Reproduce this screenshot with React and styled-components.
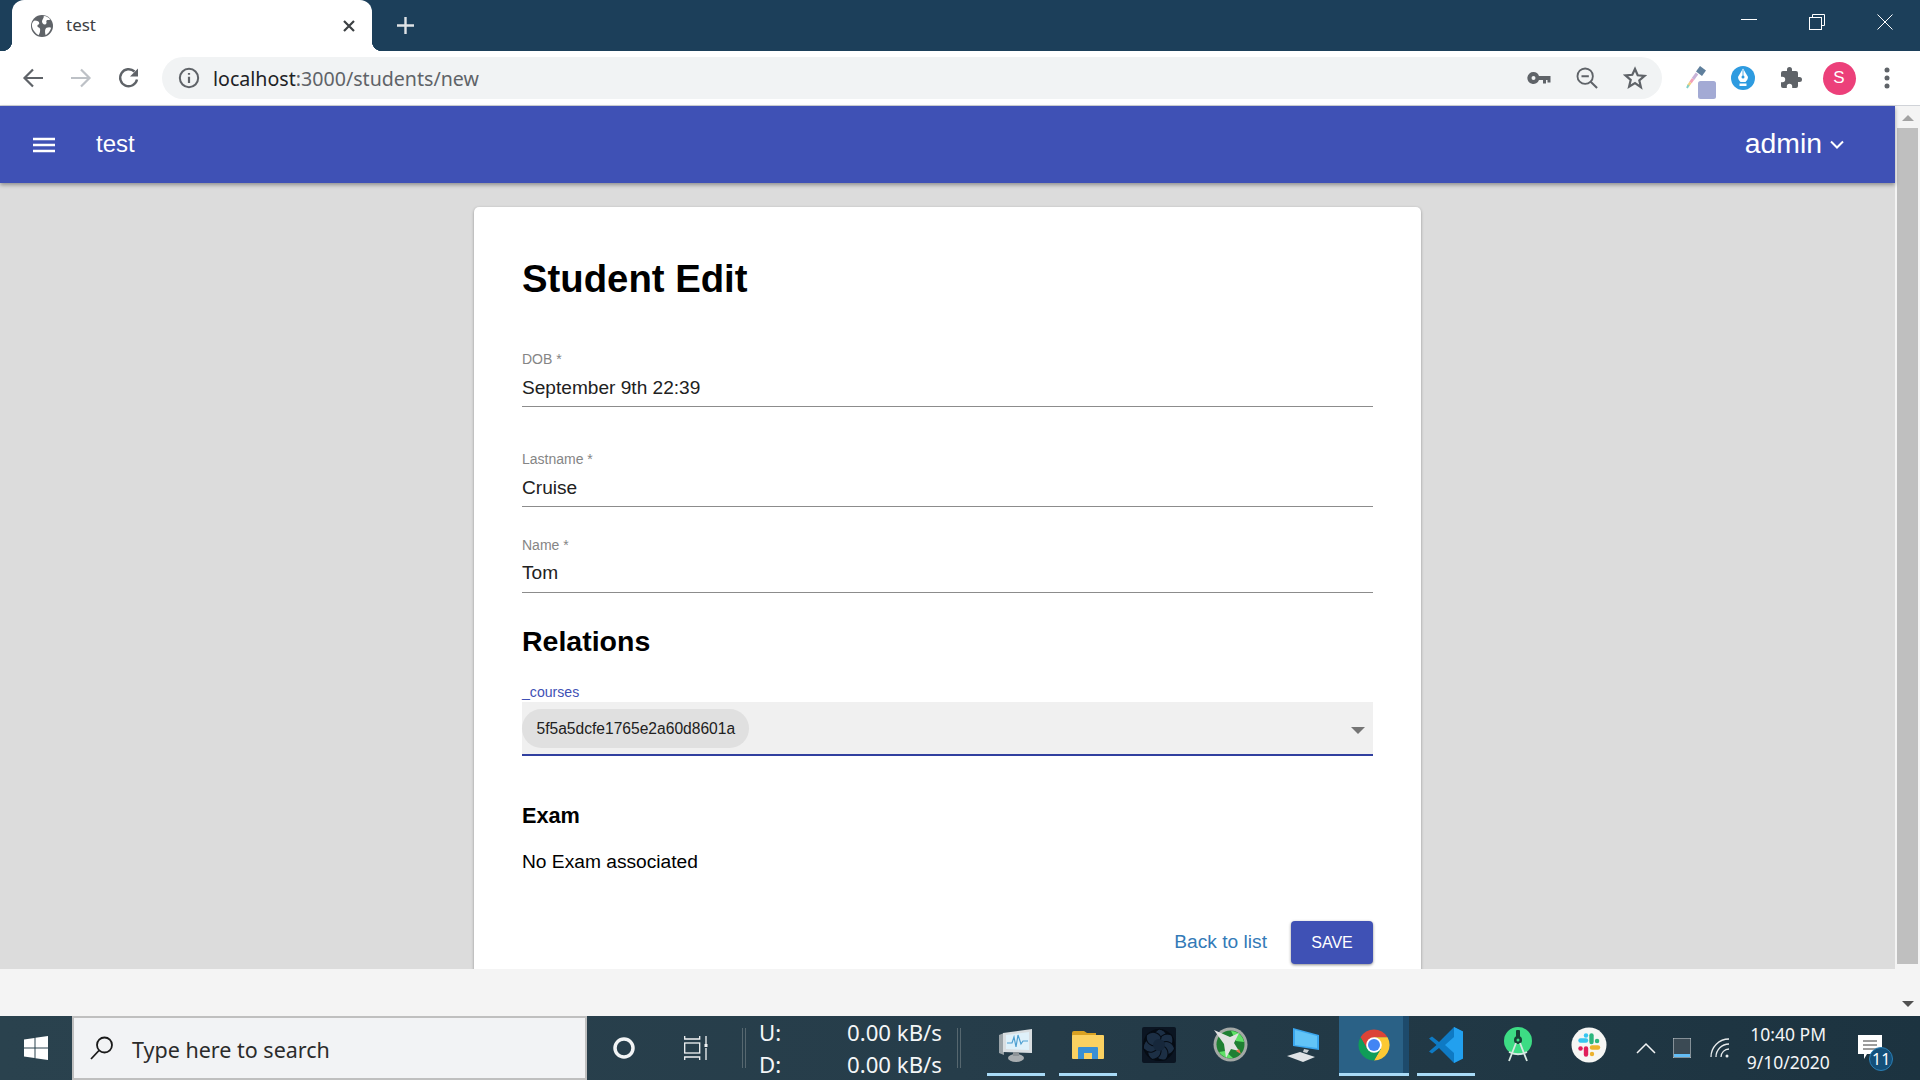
import styled, { createGlobalStyle } from "styled-components";

const GlobalStyle = createGlobalStyle`
  html, body { margin: 0; padding: 0; height: 100%; overflow: hidden; }
  body { font-family: "Liberation Sans", Arial, sans-serif; }
  #root { height: 100%; }
`;

const Screen = styled.div`
  display: flex;
  flex-direction: column;
  width: 1920px;
  height: 1080px;
  overflow: hidden;
  background: #fff;
`;

/* browser chrome */
const TabStrip = styled.div`
  display: flex;
  align-items: stretch;
  height: 51px;
  flex: none;
  background: #1c3f5a;
  padding-left: 12px;
`;

const Tab = styled.div`
  display: flex;
  align-items: center;
  width: 360px;
  background: #fff;
  border-radius: 12px 12px 0 0;
  padding: 0 16px 0 19px;
  box-sizing: border-box;
  position: relative;
  &::before,
  &::after {
    content: "";
    position: absolute;
    bottom: 0;
    width: 10px;
    height: 10px;
  }
  &::before {
    left: -10px;
    background: radial-gradient(circle at 0 0, transparent 10px, #fff 10.5px);
  }
  &::after {
    right: -10px;
    background: radial-gradient(circle at 100% 0, transparent 10px, #fff 10.5px);
  }
`;

const TabTitle = styled.span`
  flex: 1;
  margin-left: 13px;
  padding-bottom: 1px;
  font: 17px/24px "Noto Sans", sans-serif;
  color: #3c4043;
`;

const NewTab = styled.div`
  display: flex;
  align-items: center;
  justify-content: center;
  width: 66px;
`;

const WindowControls = styled.div`
  display: flex;
  margin-left: auto;
  padding: 0 1px 8px 0;
`;

const WindowButton = styled.div`
  display: flex;
  align-items: center;
  justify-content: center;
  width: 68px;
`;

const Toolbar = styled.div`
  display: flex;
  align-items: center;
  height: 54px;
  flex: none;
  padding-left: 9px;
  background: #fff;
  border-bottom: 1px solid #d0d3d8;
`;

const IconSlot = styled.div`
  display: flex;
  align-items: center;
  justify-content: center;
  flex: none;
  width: 48px;
`;

const UrlPill = styled.div`
  display: flex;
  align-items: center;
  flex: none;
  width: 1500px;
  height: 42px;
  margin: 0 9px;
  padding: 0 3px 0 16px;
  box-sizing: border-box;
  background: #f1f3f4;
  border-radius: 21px;
`;

const UrlText = styled.div`
  flex: 1;
  margin-left: 13px;
  padding-top: 1px;
  font: 19.6px/28px "Noto Sans", sans-serif;
  color: #5f6368;
  & > b {
    font-weight: 400;
    color: #202124;
  }
`;

const Avatar = styled.div`
  display: flex;
  align-items: center;
  justify-content: center;
  width: 33px;
  height: 33px;
  border-radius: 50%;
  background: #ec407a;
  color: #fff;
  font-size: 17px;
`;

/* page */
const PageRow = styled.div`
  display: flex;
  flex: none;
  height: 910px;
`;

const PageColumn = styled.div`
  display: flex;
  flex-direction: column;
  flex: 1;
  min-width: 0;
`;

const AppBar = styled.header`
  display: flex;
  align-items: center;
  flex: none;
  height: 77px;
  padding: 0 51px 0 33px;
  background: #3f51b5;
  color: #fff;
  box-shadow: 0 2px 4px rgba(0, 0, 0, 0.35);
  position: relative;
  z-index: 1;
`;

const AppTitle = styled.div`
  flex: 1;
  margin-left: 41px;
  padding-bottom: 2px;
  font-size: 24px;
`;

const UserMenu = styled.div`
  display: flex;
  align-items: center;
  gap: 8px;
`;

const UserName = styled.span`
  padding-bottom: 2px;
  font-size: 28.4px;
`;

const Content = styled.main`
  flex: 1;
  min-height: 0;
  overflow: hidden;
  padding-top: 24px;
  background: #dcdcdc;
`;

const Card = styled.section`
  width: 947px;
  margin: 0 auto;
  padding: 50px 48px 48px;
  box-sizing: border-box;
  background: #fff;
  border-radius: 5px;
  box-shadow: 0 1px 3px rgba(0, 0, 0, 0.35);
`;

const Title = styled.h1`
  margin: 0;
  font-size: 38.3px;
  line-height: 44px;
  font-weight: 700;
  color: #000;
`;

const Field = styled.div`
  margin-top: ${({ $top }) => $top}px;
  border-bottom: 1px solid #8c8c8c;
  padding-bottom: ${({ $tight }) => ($tight ? 6 : 5)}px;
`;

const FieldLabel = styled.div`
  font-size: 14px;
  line-height: 16px;
  color: #858585;
`;

const FieldValue = styled.div`
  margin-top: ${({ $tight }) => ($tight ? 7 : 8)}px;
  font-size: 19.1px;
  line-height: 26px;
  color: #212121;
`;

const SectionTitle = styled.h2`
  margin: 31px 0 0;
  font-size: 28.5px;
  line-height: 34px;
  font-weight: 700;
  color: #000;
`;

const SelectLabel = styled.div`
  margin-top: 26px;
  font-size: 14.1px;
  line-height: 16px;
  color: #3f51b5;
`;

const SelectBox = styled.div`
  display: flex;
  align-items: flex-start;
  height: 54px;
  margin-top: 2px;
  padding-top: 7px;
  padding-right: 8px;
  box-sizing: border-box;
  background: #f0f0f0;
  border-bottom: 2px solid #303f9f;
`;

const Chip = styled.div`
  display: flex;
  align-items: center;
  height: 39px;
  padding: 0 14px 0 14.5px;
  border-radius: 20px;
  background: #e0e0e0;
  font-size: 15.6px;
  color: #212121;
`;

const SelectArrow = styled.div`
  width: 0;
  height: 0;
  margin: 18px 0 0 auto;
  border-left: 7px solid transparent;
  border-right: 7px solid transparent;
  border-top: 7px solid #757575;
`;

const SubTitle = styled.h3`
  margin: 47px 0 0;
  font-size: 21.7px;
  line-height: 26px;
  font-weight: 700;
  color: #000;
`;

const Paragraph = styled.p`
  margin: 20px 0 0;
  font-size: 19.2px;
  line-height: 26px;
  color: #000;
`;

const Actions = styled.div`
  display: flex;
  align-items: center;
  justify-content: flex-end;
  gap: 24px;
  margin-top: 46px;
`;

const BackLink = styled.a`
  padding-bottom: 2px;
  font-size: 19.2px;
  color: #337ab7;
  text-decoration: none;
`;

const SaveButton = styled.button`
  width: 82px;
  height: 43px;
  border: 0;
  border-radius: 4px;
  background: #3f51b5;
  color: #fff;
  font: 16px "Liberation Sans", Arial, sans-serif;
  box-shadow: 0 1px 3px rgba(0, 0, 0, 0.45);
`;

const BottomStrip = styled.div`
  flex: none;
  height: 47px;
  background: #f4f4f4;
`;

const Scrollbar = styled.div`
  display: flex;
  flex-direction: column;
  align-items: center;
  flex: none;
  width: 25px;
  background: #f4f4f4;
`;

const ScrollArrow = styled.div`
  flex: none;
  width: 0;
  height: 0;
  margin: ${({ $down }) => ($down ? "auto 0 9px" : "9px 0 7px")};
  border-left: 6px solid transparent;
  border-right: 6px solid transparent;
  ${({ $down }) =>
    $down
      ? "border-top: 6px solid #505050;"
      : "border-bottom: 6px solid #a3a3a3;"}
`;

const ScrollThumb = styled.div`
  flex: none;
  width: 21px;
  height: 836px;
  background: #bfbfbf;
`;

/* windows taskbar */
const Taskbar = styled.footer`
  display: flex;
  align-items: center;
  flex: none;
  height: 64px;
  background: linear-gradient(90deg, #2a424e, #263d4a 50%, #1c3340);
  color: #fff;
  font-family: "Noto Sans", sans-serif;
`;

const StartSlot = styled.div`
  display: flex;
  align-items: center;
  justify-content: center;
  flex: none;
  width: 72px;
`;

const SearchBox = styled.div`
  display: flex;
  align-items: center;
  flex: none;
  gap: 18px;
  width: 515px;
  height: 64px;
  padding-left: 16px;
  box-sizing: border-box;
  background: #f2f3f5;
  border: 2px solid #bfbfbf;
  color: #2b2b2b;
  font-size: 21.5px;
`;

const SearchText = styled.span`
  padding-top: 2px;
`;

const Divider = styled.div`
  flex: none;
  width: 2px;
  height: 40px;
  border-left: 1px solid #56676f;
  border-right: 1px solid #56676f;
  margin: ${({ $m }) => $m};
`;

const NetSpeed = styled.div`
  display: grid;
  grid-template-columns: 88px 94px;
  flex: none;
  width: 195px;
  box-sizing: border-box;
  padding: 2px 0 0 13px;
  font-size: 22.2px;
  line-height: 32px;
  color: #f4f6f7;
  & > span:nth-child(even) {
    text-align: right;
    white-space: nowrap;
  }
`;

const TaskSlot = styled.div`
  display: flex;
  justify-content: center;
  flex: none;
  width: 71.7px;
  height: 64px;
`;

const TaskButton = styled.div`
  display: flex;
  align-items: center;
  justify-content: center;
  width: ${({ $active }) => ($active ? 70 : 58)}px;
  height: 60px;
  box-sizing: border-box;
  border-bottom: 3px solid ${({ $open }) => ($open ? "#a9dbf7" : "transparent")};
  ${({ $active }) =>
    $active &&
    "background: linear-gradient(90deg, #2a6186 0 64px, #1d4a6b 64px);"}
`;

const Tray = styled.div`
  display: flex;
  align-items: center;
  flex: 1;
  height: 64px;
  padding-left: 3px;
`;

const TrayItem = styled.div`
  display: flex;
  align-items: center;
  justify-content: center;
  flex: none;
  width: ${({ $w }) => $w}px;
`;

const Clock = styled.div`
  flex: none;
  width: 96px;
  text-align: center;
  font-size: 17.5px;
  line-height: 28px;
  color: #f4f6f7;
  white-space: nowrap;
`;

const Notification = styled.div`
  flex: none;
  width: 24px;
  height: 26px;
  margin-left: 22px;
  position: relative;
`;

const NotificationBadge = styled.div`
  position: absolute;
  right: -11px;
  bottom: -10px;
  display: flex;
  align-items: center;
  justify-content: center;
  width: 24px;
  height: 24px;
  border-radius: 50%;
  background: #14507a;
  border: 1px solid #2b7fb5;
  box-sizing: border-box;
  font-size: 16px;
  color: #fff;
`;

const Svg = ({ s = 24, w, h, vb = "0 0 24 24", children, ...rest }) => (
  <svg width={w || s} height={h || s} viewBox={vb} {...rest}>
    {children}
  </svg>
);

const Globe = () => (
  <Svg s={22}>
    <circle cx="12" cy="12" r="12" fill="#5f6368" />
    <path
      d="M4 6c3 0 5 1 5 3s-2 1-2 3 3 1 3 4-1 5-2 6C5 20 1 16 1 11c0-2 1-4 3-5zM14 1c3 0 6 2 7 4-2 1-3 0-4 1s1 3-1 4-4-1-4-3 2-3 2-6zM17 14c2-1 4-1 5 0-1 4-4 7-6 8-1-3-1-7 1-8z"
      fill="#fff"
    />
  </Svg>
);

const ToolbarIcons = {
  back: (
    <Svg s={24}>
      <path d="M22 12H4M12 3.5 3.5 12l8.5 8.5" fill="none" stroke="#5f6368" strokeWidth="2.2" />
    </Svg>
  ),
  forward: (
    <Svg s={24}>
      <path d="M2 12h18M12 3.5l8.5 8.5-8.5 8.5" fill="none" stroke="#bdc1c6" strokeWidth="2.2" />
    </Svg>
  ),
  reload: (
    <Svg s={24}>
      <path d="M20 13.5A8.5 8.5 0 1 1 17.5 5.5" fill="none" stroke="#5f6368" strokeWidth="2.4" />
      <path d="M21 2.5v8h-8z" fill="#5f6368" />
    </Svg>
  ),
  info: (
    <Svg s={22}>
      <circle cx="12" cy="12" r="10" fill="none" stroke="#5f6368" strokeWidth="2.2" />
      <path d="M12 10.5v7M12 6.5v2" stroke="#5f6368" strokeWidth="2.4" />
    </Svg>
  ),
  key: (
    <Svg w={24} h={14} vb="0 0 24 14">
      <path d="M6.5 1a6 6 0 1 0 5.5 8h4v3.5h3V9h1.5v2.5h3V5H12a6 6 0 0 0-5.5-4zm0 4a2 2 0 1 1 0 4 2 2 0 0 1 0-4z" fill="#5f6368" />
    </Svg>
  ),
  zoom: (
    <Svg s={22}>
      <circle cx="10" cy="10" r="8.4" fill="none" stroke="#5f6368" strokeWidth="2" />
      <path d="M6 10h8M16 16l7 7" stroke="#5f6368" strokeWidth="2.2" />
    </Svg>
  ),
  star: (
    <Svg s={24}>
      <path d="M12 3l2.7 6.3 6.8.6-5.2 4.500 1.600 6.700L12 17l-5.900 3.600 1.600-6.700-5.200-4.500 6.800-.6z" fill="none" stroke="#5f6368" strokeWidth="2.2" />
    </Svg>
  ),
  picker: (
    <svg width="42" height="42" viewBox="0 0 42 42">
      <path d="M26 9l6 4.500-4 5.500-6-4.500z" fill="#5f7f9c" />
      <path d="M23 16.500 19 22" stroke="#c7b3d8" strokeWidth="3" />
      <path d="M19 22l-2.500 3.500" stroke="#f2a0b8" strokeWidth="3" />
      <path d="M16.500 25.500 14 29" stroke="#f0d080" strokeWidth="2.500" />
      <path d="M14.500 28 13 31" stroke="#7fd0c8" strokeWidth="2" />
      <rect x="24" y="24" width="18" height="18" rx="2.500" fill="#a3aad4" />
    </svg>
  ),
  pen: (
    <Svg s={24}>
      <circle cx="12" cy="12" r="12" fill="#2e9be0" />
      <path d="M12 2.500l5 8.500c0 2-1.500 4-2.500 5h-5C8.500 15 7 13 7 11z" fill="#fff" />
      <path d="M8.500 17.500h7V20h-7z" fill="#fff" />
      <circle cx="12" cy="11" r="1.500" fill="#2e9be0" />
      <path d="M12 4v6" stroke="#2e9be0" strokeWidth=".8" />
    </Svg>
  ),
  puzzle: (
    <Svg s={24}>
      <path d="M20.500 11H19V7a2 2 0 0 0-2-2h-4V3.500a2.500 2.500 0 0 0-5 0V5H4a2 2 0 0 0-2 2v3.800h1.500a2.700 2.700 0 0 1 0 5.400H2V20a2 2 0 0 0 2 2h3.800v-1.500a2.700 2.700 0 0 1 5.400 0V22H17a2 2 0 0 0 2-2v-4h1.500a2.500 2.500 0 0 0 0-5z" fill="#5f6368" />
    </Svg>
  ),
  dots: (
    <Svg w={8} h={24} vb="0 0 8 24">
      <circle cx="4" cy="4" r="2.500" fill="#5f6368" />
      <circle cx="4" cy="12" r="2.500" fill="#5f6368" />
      <circle cx="4" cy="20" r="2.500" fill="#5f6368" />
    </Svg>
  ),
};

const fanBlades = [0, 1, 2, 3, 4, 5, 6];

const TaskIcons = {
  monitor: (
    <svg width="40" height="40" viewBox="0 0 40 40">
      <path d="M3 10l5-2v22l-5-2z" fill="#9aa3a8" />
      <path d="M7 8l29-4v24L7 27z" fill="#d9dee1" />
      <path d="M10 10l23-3v18l-23-1z" fill="#dff1fa" />
      <path d="M11 18h5l2-6 2 10 2-12 3 9 2-3h5" fill="none" stroke="#4d9fd1" strokeWidth="1.2" />
      <ellipse cx="20" cy="33" rx="8" ry="4" fill="#a8adb0" />
      <rect x="17" y="27" width="6" height="4" fill="#8d9397" />
    </svg>
  ),
  folder: (
    <svg width="34" height="28" viewBox="0 0 34 28">
      <path d="M1 2a2 2 0 0 1 2-2h10l3 2h9v4H1z" fill="#d9a122" />
      <rect x="1" y="4" width="32" height="24" rx="1" fill="#fbd161" />
      <path d="M7 28V17a1 1 0 0 1 1-1h18a1 1 0 0 1 1 1v11h-6v-6h-8v6z" fill="#3a8fd4" />
    </svg>
  ),
  fan: (
    <svg width="34" height="36" viewBox="0 0 34 36">
      <rect width="34" height="36" rx="2" fill="#0b1522" />
      <circle cx="17" cy="18" r="16" fill="#060c14" />
      {fanBlades.map((i) => (
        <path
          key={i}
          d="M17 18C10 14 10 6 17 2c7 1 10 8 7 13z"
          fill="#1c2f45"
          stroke="#060c14"
          strokeWidth="1"
          transform={`rotate(${i * 51.4} 17 18)`}
        />
      ))}
      <circle cx="17" cy="18" r="6" fill="#16273b" />
    </svg>
  ),
  afterburner: (
    <svg width="35" height="35" viewBox="0 0 35 35">
      <circle cx="17.500" cy="17.500" r="17" fill="#a4a9a6" />
      <circle cx="17.500" cy="17.500" r="14" fill="#1f7f32" />
      <path d="M18 4c7 0 12 5 13 11l-8-1zM12 24l8 7c-6 1-11-2-14-6z" fill="#5fe066" />
      <path d="M1 3l16 7 9-4-5 10 5 8-8-2-5 9-2-14z" fill="#e2e2e2" />
      <path d="M23 24l5 3-2-5z" fill="#e8744a" />
    </svg>
  ),
  laptop: (
    <svg width="38" height="36" viewBox="0 0 38 36">
      <path d="M9 1l26 7v15L9 19z" fill="#3aa6ee" />
      <path d="M11 3l22 6v12L11 18z" fill="#62c4f7" />
      <path d="M20 22l5 1-2 3-4-1z" fill="#c7cdd1" />
      <path d="M3 29l13-4 15 5-12 5z" fill="#dfe3e6" />
    </svg>
  ),
  chrome: (
    <svg width="34" height="34" viewBox="0 0 48 48">
      <path d="M24 13h19.050A22 22 0 0 0 4.950 13L14.500 29.500z" fill="#db4437" />
      <path d="M24 13h19.050A22 22 0 0 1 24 46l9.500-16.500z" fill="#fcc934" />
      <path d="M14.500 29.500 4.950 13A22 22 0 0 0 24 46l9.500-16.500z" fill="#0f9d58" />
      <circle cx="24" cy="24" r="11" fill="#fff" />
      <circle cx="24" cy="24" r="8.500" fill="#4285f4" />
    </svg>
  ),
  vscode: (
    <svg width="36" height="38" viewBox="0 0 36 38">
      <path d="M26 1l9 4.500v27L26 37 11 22l-7 5.500L1 25.500 8.500 19 1 12.500 4 10.500 11 16z" fill="#0e7ac4" />
      <path d="M26 1l9 4.500v27L26 37zM26 11l-9 8 9 8z" fill="#22a0ef" fillRule="evenodd" />
    </svg>
  ),
  android: (
    <svg width="32" height="36" viewBox="0 0 32 36">
      <circle cx="16" cy="14" r="14" fill="#3ddc84" />
      <rect x="14" y="3" width="4" height="8" rx="1" fill="#173f35" />
      <circle cx="16" cy="13" r="4" fill="#173f35" />
      <circle cx="16" cy="13" r="1.500" fill="#3ddc84" />
      <path d="M14 16 7 34M18 16l7 18M7 25c6 3 12 3 18 0" stroke="#d8e8e2" strokeWidth="1.8" fill="none" />
    </svg>
  ),
  slack: (
    <svg width="36" height="36" viewBox="0 0 36 36" strokeLinecap="round" strokeWidth="4.400" fill="none">
      <circle cx="18" cy="18" r="17.500" fill="#f6f6f4" stroke="none" />
      <path d="M15 13.500H9.500" stroke="#36c5f0" />
      <path d="M15 8.500v.1" stroke="#36c5f0" />
      <path d="M20.500 15V8.500" stroke="#2eb67d" />
      <path d="M26 14h.1" stroke="#2eb67d" />
      <path d="M21 20.500h6" stroke="#ecb22e" />
      <path d="M21 27v.1" stroke="#ecb22e" />
      <path d="M15 21.500v6" stroke="#e01e5a" />
      <path d="M9.500 21.500h.1" stroke="#e01e5a" />
    </svg>
  ),
};

const taskApps = [
  { key: "monitor", open: true },
  { key: "folder", open: true },
  { key: "fan" },
  { key: "afterburner" },
  { key: "laptop" },
  { key: "chrome", open: true, active: true },
  { key: "vscode", open: true },
  { key: "android" },
  { key: "slack" },
];

export default function App() {
  return (
    <Screen>
      <GlobalStyle />
      <TabStrip>
        <Tab>
          <Globe />
          <TabTitle>test</TabTitle>
          <svg width="14" height="14" viewBox="0 0 14 14">
            <path d="M2 2l10 10M12 2 2 12" stroke="#3c4043" strokeWidth="2.2" />
          </svg>
        </Tab>
        <NewTab>
          <svg width="19" height="19" viewBox="0 0 19 19">
            <path d="M9.500 1v17M1 9.500h17" stroke="#dfe3e6" strokeWidth="2.4" />
          </svg>
        </NewTab>
        <WindowControls>
          <WindowButton>
            <svg width="16" height="16" viewBox="0 0 16 16">
              <path d="M0 5.500h16" stroke="#fff" />
            </svg>
          </WindowButton>
          <WindowButton>
            <svg width="16" height="16" viewBox="0 0 16 16" fill="none" stroke="#fff">
              <path d="M3.500 3.500V.5h12v11h-3" />
              <rect x=".5" y="3.500" width="12" height="12" />
            </svg>
          </WindowButton>
          <WindowButton>
            <svg width="16" height="16" viewBox="0 0 16 16">
              <path d="M.5.5l15 15M15.500.5l-15 15" stroke="#fff" />
            </svg>
          </WindowButton>
        </WindowControls>
      </TabStrip>

      <Toolbar>
        <IconSlot>{ToolbarIcons.back}</IconSlot>
        <IconSlot>{ToolbarIcons.forward}</IconSlot>
        <IconSlot>{ToolbarIcons.reload}</IconSlot>
        <UrlPill>
          {ToolbarIcons.info}
          <UrlText>
            <b>localhost</b>:3000/students/new
          </UrlText>
          <IconSlot>{ToolbarIcons.key}</IconSlot>
          <IconSlot>{ToolbarIcons.zoom}</IconSlot>
          <IconSlot>{ToolbarIcons.star}</IconSlot>
        </UrlPill>
        <IconSlot>{ToolbarIcons.picker}</IconSlot>
        <IconSlot>{ToolbarIcons.pen}</IconSlot>
        <IconSlot>{ToolbarIcons.puzzle}</IconSlot>
        <IconSlot>
          <Avatar>S</Avatar>
        </IconSlot>
        <IconSlot>{ToolbarIcons.dots}</IconSlot>
      </Toolbar>

      <PageRow>
        <PageColumn>
          <AppBar>
            <svg width="22" height="16" viewBox="0 0 22 16">
              <path d="M0 2h22M0 8h22M0 14h22" stroke="#fff" strokeWidth="2.5" />
            </svg>
            <AppTitle>test</AppTitle>
            <UserMenu>
              <UserName>admin</UserName>
              <svg width="14" height="9" viewBox="0 0 14 9">
                <path d="M1 1.500l6 6 6-6" fill="none" stroke="#fff" strokeWidth="2" />
              </svg>
            </UserMenu>
          </AppBar>
          <Content>
            <Card>
              <Title>Student Edit</Title>
              <Field $top={50}>
                <FieldLabel>DOB *</FieldLabel>
                <FieldValue>September 9th 22:39</FieldValue>
              </Field>
              <Field $top={44}>
                <FieldLabel>Lastname *</FieldLabel>
                <FieldValue>Cruise</FieldValue>
              </Field>
              <Field $top={30} $tight>
                <FieldLabel>Name *</FieldLabel>
                <FieldValue $tight>Tom</FieldValue>
              </Field>
              <SectionTitle>Relations</SectionTitle>
              <SelectLabel>_courses</SelectLabel>
              <SelectBox>
                <Chip>5f5a5dcfe1765e2a60d8601a</Chip>
                <SelectArrow />
              </SelectBox>
              <SubTitle>Exam</SubTitle>
              <Paragraph>No Exam associated</Paragraph>
              <Actions>
                <BackLink href="#">Back to list</BackLink>
                <SaveButton>SAVE</SaveButton>
              </Actions>
            </Card>
          </Content>
          <BottomStrip />
        </PageColumn>
        <Scrollbar>
          <ScrollArrow />
          <ScrollThumb />
          <ScrollArrow $down />
        </Scrollbar>
      </PageRow>

      <Taskbar>
        <StartSlot>
          <svg width="24" height="24" viewBox="0 0 24 24" fill="#fff">
            <path d="M0 3.500 10.500 2v9.500H0zM11.500 1.800 24 0v11.500H11.500zM0 12.500h10.500V22L0 20.500zM11.500 12.500H24V24l-12.500-1.800z" />
          </svg>
        </StartSlot>
        <SearchBox>
          <svg width="24" height="24" viewBox="0 0 24 24" fill="none" stroke="#1a1a1a" strokeWidth="1.8">
            <circle cx="14.500" cy="9" r="7.500" />
            <path d="M9 14.500 1 23" />
          </svg>
          <SearchText>Type here to search</SearchText>
        </SearchBox>
        <TrayItem $w={74}>
          <svg width="24" height="24" viewBox="0 0 24 24">
            <circle cx="12" cy="12" r="9" fill="none" stroke="#f2f4f5" strokeWidth="3.5" />
          </svg>
        </TrayItem>
        <TrayItem $w={69}>
          <svg width="24" height="24" viewBox="0 0 24 24" fill="none" stroke="#f2f4f5" strokeWidth="1.3">
            <path d="M.7 0v3h15V0M.7 24v-3h15v3" />
            <rect x=".7" y="7" width="15" height="10" />
            <path d="M22 0v8M22 12v12" />
            <rect x="20.500" y="8" width="3" height="3" fill="#f2f4f5" stroke="none" />
          </svg>
        </TrayItem>
        <Divider $m="0 0 0 12px" />
        <NetSpeed>
          <span>U:</span>
          <span>0.00 kB/s</span>
          <span>D:</span>
          <span>0.00 kB/s</span>
        </NetSpeed>
        <Divider $m="0 19px 0 16px" />
        {taskApps.map((app) => (
          <TaskSlot key={app.key}>
            <TaskButton $open={app.open} $active={app.active}>
              {TaskIcons[app.key]}
            </TaskButton>
          </TaskSlot>
        ))}
        <Tray>
          <TrayItem $w={36}>
            <svg width="20" height="12" viewBox="0 0 20 12">
              <path d="M1 11l9-9 9 9" fill="none" stroke="#f2f4f5" strokeWidth="1.5" />
            </svg>
          </TrayItem>
          <TrayItem $w={36}>
            <svg width="18" height="20" viewBox="0 0 18 20">
              <rect width="18" height="20" fill="#3b4a54" stroke="#cfd6da" />
              <rect x="1" y="16" width="16" height="3" fill="#63bdf5" />
            </svg>
          </TrayItem>
          <TrayItem $w={40}>
            <svg width="20" height="20" viewBox="0 0 20 20" fill="none" stroke="#e8eced" strokeWidth="1.3">
              <path d="M1 19A18 18 0 0 1 19 1M6 19A13 13 0 0 1 19 6M11 19a8 8 0 0 1 8-8" />
              <circle cx="17" cy="18" r="1.5" fill="#e8eced" stroke="none" />
            </svg>
          </TrayItem>
          <Clock>
            <div>10:40 PM</div>
            <div>9/10/2020</div>
          </Clock>
          <Notification>
            <svg width="24" height="26" viewBox="0 0 24 26">
              <path d="M0 0h24v19H9l-3 5v-5H0z" fill="#fff" />
              <path d="M5 6h14M5 10h14M5 14h14" stroke="#3a3a3a" />
            </svg>
            <NotificationBadge>11</NotificationBadge>
          </Notification>
        </Tray>
      </Taskbar>
    </Screen>
  );
}
